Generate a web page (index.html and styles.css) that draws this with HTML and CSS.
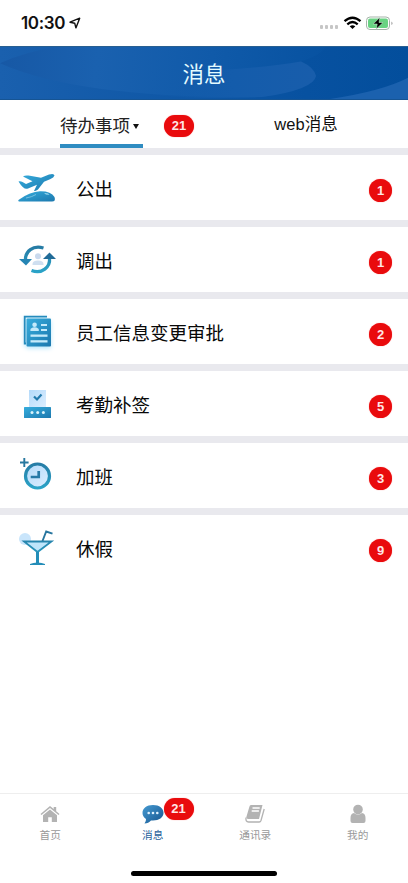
FILE: index.html
```
<!DOCTYPE html>
<html lang="zh-CN">
<head>
<meta charset="utf-8">
<meta name="viewport" content="width=device-width, initial-scale=1">
<title>消息</title>
<link rel="stylesheet" href="styles.css">
</head>
<body>
<svg class="defs" width="0" height="0" aria-hidden="true">
  <defs>
    <linearGradient id="blue" x1="0" y1="0" x2="1" y2="1"><stop offset="0" stop-color="#36addd"/><stop offset="1" stop-color="#1c78ae"/></linearGradient>
    <linearGradient id="down" gradientUnits="userSpaceOnUse" x1="0" y1="3" x2="0" y2="36"><stop offset="0" stop-color="#25759f"/><stop offset="1" stop-color="#2ba9cd"/></linearGradient>
    <linearGradient id="pale" x1="0" y1="0" x2="1" y2="1"><stop offset="0" stop-color="#b4dafa"/><stop offset="1" stop-color="#dceeff"/></linearGradient>
    <linearGradient id="bubble" x1="0" y1="0" x2="1" y2="1"><stop offset="0" stop-color="#459bd2"/><stop offset="1" stop-color="#17558f"/></linearGradient>
    <linearGradient id="lens" gradientUnits="userSpaceOnUse" x1="0" y1="0" x2="325" y2="30"><stop offset="0" stop-color="#1758a5"/><stop offset=".3" stop-color="#1a61af"/><stop offset=".65" stop-color="#105aa9"/><stop offset="1" stop-color="#0752a1"/></linearGradient>
    <linearGradient id="swell" gradientUnits="userSpaceOnUse" x1="150" y1="0" x2="316" y2="0"><stop offset="0" stop-color="#145cab" stop-opacity="0"/><stop offset=".5" stop-color="#145cab"/><stop offset="1" stop-color="#185dab"/></linearGradient>
  </defs>
</svg>
<div class="app">
  <div class="status">
    <span class="time">10:30</span>
    <svg class="loc" width="12" height="12" viewBox="0 0 12 12"><path d="M1 5.2 10.7 1.2 6.9 10.9 5.7 6.2Z" fill="none" stroke="#111" stroke-width="1.4" stroke-linejoin="round"/></svg>
    <svg class="system" width="76" height="16" viewBox="0 0 76 16">
      <g fill="#c6c6c6"><rect x="1" y="10" width="3" height="4" rx="1"/><rect x="6" y="10" width="3" height="4" rx="1"/><rect x="11" y="10" width="3" height="4" rx="1"/><rect x="16" y="10" width="3" height="4" rx="1"/></g>
      <g fill="none" stroke="#000" stroke-width="2.300"><path d="M25.500 6.200Q33.500-.8 41.500 6.200"/><path d="M28.300 9.300Q33.500 4.800 38.700 9.300"/></g>
      <path d="M30.700 11.300Q33.500 9 36.300 11.300L33.500 14Z"/>
      <rect x="47.500" y="2" width="23" height="12.500" rx="3.500" fill="#fff" stroke="#a4b3a8"/>
      <rect x="49" y="3.500" width="20" height="9.500" rx="2" fill="#68d382"/>
      <path d="M72.500 6.500q2 1.800 0 3.600Z" fill="#888"/>
      <path d="M60.800 2.500 54.200 9h4L57.300 14 64 7.500h-4Z" stroke="#d9f5df" stroke-width=".5"/>
    </svg>
  </div>
  <header class="header">
    <svg class="waves" viewBox="0 0 408 54" preserveAspectRatio="none">
      <path d="M0 17Q24 5 58 0H325Q322 8 301 15Q314 21 316 30Q314 44 262 52Q80 54 0 17Z" fill="url(#lens)"/>
      <path d="M150 26Q245 25 301 15Q314 21 316 30Q314 44 262 52Q200 54 150 50Z" fill="url(#swell)"/>
      <path d="M408 32Q382 46 330 54H408Z" fill="#1b61ae"/>
    </svg>
    <h1 class="title">消息</h1>
  </header>
  <div class="tabs">
    <div class="tab tab-active"><span class="tab-label">待办事项<i class="caret"></i></span><span class="badge wide">21</span></div>
    <div class="tab tab-web">web消息</div>
  </div>
  <main class="list">
    <div class="row">
      <svg class="icon" viewBox="0 0 40 40"><path d="M1.500 13.500Q3.500 13 5.500 14L9 16 15.500 13.200 6 8.500Q8 7 11.500 7.500L24 9.800 32 6.600Q37 5 37.500 7.500 37 9.500 33 11.300L27 13.700 21 21.500Q18 23.500 17 23L20 16.700 11 20.500Q7 22.500 1.500 13.500Z" fill="url(#blue)"/><path d="M2 33.500Q0 32.500 3 31Q13 23.800 23 23.200Q34 23 37.500 29Q39 33.500 35 33.500Z" fill="url(#blue)"/><path d="M9 30Q15 29 19 26.500" fill="none" stroke="#a5dcf2" stroke-width=".6"/><path d="M27 25l4 .5 1.500 1.300-3.500-.3Z" fill="#a6dff3"/></svg>
      <span class="name">公出</span><span class="badge">1</span>
    </div>
    <div class="row">
      <svg class="icon" viewBox="0 0 40 40"><circle cx="21" cy="16.200" r="3" fill="#c9d9ed"/><path d="M15.500 25v-1q0-3.500 5.500-3.500t5.500 3.500v1Z" fill="#cfdff0"/><g fill="none" stroke="url(#down)" stroke-width="3.300"><path d="M8.500 20.500C8 11 16 5 26.500 8"/><path d="M32.500 18C33.500 27 25 34.500 14.500 30.500"/></g><path d="M2 19H15L9 25.500Z" fill="#2585b4"/><path d="M26 19H39L32.500 12.500Z" fill="#216b97"/></svg>
      <span class="name">调出</span><span class="badge">1</span>
    </div>
    <div class="row">
      <svg class="icon sheet" viewBox="0 0 40 40"><path d="M9 31.500H7.700V4.700H30" fill="none" stroke="#258bbd" stroke-width="1.800"/><rect x="9.500" y="6.500" width="24.500" height="28" rx="1" fill="url(#blue)"/><g fill="#c4eafa"><circle cx="17.600" cy="12.800" r="2.300"/><path d="M13.400 19v-1.200q0-2 4.200-2.500 4.200.5 4.200 2.500V19Z"/><rect x="24" y="12" width="6" height="2"/><rect x="24" y="17" width="6" height="2"/><rect x="13.500" y="22.500" width="17" height="2.300"/><rect x="13.500" y="28.200" width="17" height="2.300"/></g></svg>
      <span class="name">员工信息变更审批</span><span class="badge">2</span>
    </div>
    <div class="row">
      <svg class="icon" viewBox="0 0 40 40"><rect x="12" y="6" width="17" height="17" fill="url(#pale)"/><path d="m17 12.500 3 3 4.500-5" fill="none" stroke="#237bae" stroke-width="2.200"/><rect x="7" y="23" width="27" height="11" rx=".5" fill="url(#blue)"/><g fill="#d9f3fb"><circle cx="15" cy="28.500" r="1.500"/><circle cx="20.700" cy="28.500" r="1.500"/><circle cx="26.400" cy="28.500" r="1.500"/></g></svg>
      <span class="name">考勤补签</span><span class="badge">5</span>
    </div>
    <div class="row">
      <svg class="icon" viewBox="0 0 40 40"><path d="M7.300 2v9M3 6.500h8.600" stroke="#28789f" stroke-width="1.900"/><circle cx="20.500" cy="20" r="12" fill="url(#pale)" stroke="url(#down)" stroke-width="3.200"/><path d="M21.700 15v6h-8" fill="none" stroke="#2779a7" stroke-width="2.700"/></svg>
      <span class="name">加班</span><span class="badge">3</span>
    </div>
    <div class="row">
      <svg class="icon" viewBox="0 0 40 40"><circle cx="8" cy="11" r="6" fill="#c9e5fb"/><path d="M7 13.500H34.500L20.500 24Z" fill="#bfe5fb" stroke="url(#down)" stroke-width="1.800"/><path d="M20.500 24V36" stroke="#238db8" stroke-width="3"/><path d="M13 37v-1q3-1.500 7.500-1.500T28 36v1Z" fill="#238db8"/><path d="m25.500 13 3.700-9.500 6.300 2.200" fill="none" stroke="#27759e" stroke-width="1.900"/></svg>
      <span class="name">休假</span><span class="badge">9</span>
    </div>
  </main>
  <nav class="nav">
    <div class="nav-item">
      <svg class="nav-icon" viewBox="0 0 22 22" fill="#b3b3b3"><path d="M1.500 11 11 3l3.700 3V4h2.500v4.200L20.500 11l-1 1.100L11 5 2.500 12.100Z"/><path d="m4 12.200 7-5.800 7 5.800V19h-5.200v-4.800H9.200V19H4Z"/></svg>
      <span>首页</span>
    </div>
    <div class="nav-item current">
      <svg class="nav-icon" viewBox="0 0 22 22"><path d="M11 2C17.500 2 21.500 5.500 21.500 10S17 17.500 11 17.500H9Q6.500 20.500 2.500 20.500 4.200 18.500 4 16 .5 13.500.5 10C.5 5.500 4.500 2 11 2Z" fill="url(#bubble)"/><g fill="#dff1ff"><circle cx="6.700" cy="10" r="1.300"/><circle cx="11" cy="10" r="1.300"/><circle cx="15.300" cy="10" r="1.300"/></g></svg>
      <span>消息</span><span class="badge wide nav-badge">21</span>
    </div>
    <div class="nav-item">
      <svg class="nav-icon" viewBox="0 0 22 22"><path d="M7 2H18.500L15 16H4Q1.800 16 2.500 13.500L5.300 4Q5.700 2 7 2Z" fill="#b3b3b3"/><path d="M8.500 5h7.200M7.700 8h7.200" stroke="#fff" stroke-width="1.300"/><path d="M2 14.500Q1.500 19 4.500 19H15.200Q16.500 19 17 17.500L20.200 6" fill="none" stroke="#b3b3b3" stroke-width="1.300"/></svg>
      <span>通讯录</span>
    </div>
    <div class="nav-item">
      <svg class="nav-icon" viewBox="0 0 22 22" fill="#b3b3b3"><circle cx="11" cy="6.500" r="4.800"/><path d="M3.500 18V15Q3.500 10.500 7 10q4 3.200 8 0 3.500.5 3.500 5v3q0 2-2 2h-11q-2 0-2-2Z"/></svg>
      <span>我的</span>
    </div>
  </nav>
  <div class="home-area"><div class="home-bar"></div></div>
</div>
</body>
</html>
```
FILE: styles.css
```
* { box-sizing: border-box; }
body { margin: 0; background: #fff; font-family: "Liberation Sans", "Noto Sans CJK SC", sans-serif; color: #111; }
.defs { position: absolute; }
.app { height: 883px; display: flex; flex-direction: column; overflow: hidden; }
.status { height: 46px; flex: none; display: flex; align-items: center; padding: 0 13px 0 21px; }
.time { font: 600 17px/20px Inter, sans-serif; letter-spacing: -0.35px; }
.loc { margin-left: 4px; }
.system { margin-left: auto; }
.header { height: 54px; flex: none; position: relative; background: linear-gradient(90deg, #1a60ae, #0751a0 75%, #034e9c); border-top: 1px solid #285f91; border-bottom: 1px solid #165493; display: flex; justify-content: center; align-items: center; }
.waves { position: absolute; inset: 0; width: 100%; height: 100%; }
.title { position: relative; margin: 0; padding-top: 4px; font-size: 21.5px; line-height: 30px; font-weight: 400; color: #e4fbff; }
.tabs { height: 48px; flex: none; display: grid; grid-template-columns: 1fr 1fr; }
.tab { display: flex; align-items: flex-start; }
.tab-active { padding-left: 60px; gap: 22px; }
.tab-label { height: 48px; width: 83px; padding-top: 9px; border-bottom: 4px solid #2f8cc1; font-size: 17.5px; line-height: 35px; display: flex; align-items: center; gap: 3px; white-space: nowrap; color: #222; }
.tab-active .wide { margin-left: -1px; }
.caret { border: 3.5px solid transparent; border-top: 5px solid #111; border-bottom: 0; }
.tab-web { justify-content: center; font-size: 16.500px; line-height: 49px; }
.badge { width: 23px; height: 23px; border-radius: 12px; background: #e90b0d; color: #ffe6e6; font-size: 13px; line-height: 23px; font-weight: 700; text-align: center; box-shadow: 0 0 1px #f66; }
.wide { width: 30px; height: 22px; line-height: 22px; }
.tab .wide { margin-top: 15px; }
.row { height: 72px; border-top: 7px solid #e9e9ee; display: flex; align-items: center; padding: 0 16px 0 17px; }
.icon { width: 40px; height: 40px; flex: none; }
.sheet { filter: drop-shadow(0 2px 2px #b9e7fb); }
.name { margin-left: 19px; padding-top: 4px; font-size: 18.500px; line-height: 28px; color: #080808; }
.row .badge { margin-left: auto; margin-top: 5px; }
.nav { margin-top: auto; height: 68px; flex: none; border-top: 1px solid #eee; display: grid; grid-template-columns: repeat(4, 102.500px); margin-left: -1px; }
.nav-item { position: relative; display: flex; flex-direction: column; align-items: center; padding-top: 9px; font-size: 10.700px; line-height: 16px; color: #999; }
.nav-icon { width: 22px; height: 22px; margin-bottom: 2px; }
.current { color: #285f9b; }
.nav-badge { position: absolute; left: 62px; top: 4px; }
.home-area { height: 22px; flex: none; display: flex; justify-content: center; align-items: flex-start; padding-top: 10px; }
.home-bar { width: 146px; height: 5px; border-radius: 3px; background: #000; }
```
